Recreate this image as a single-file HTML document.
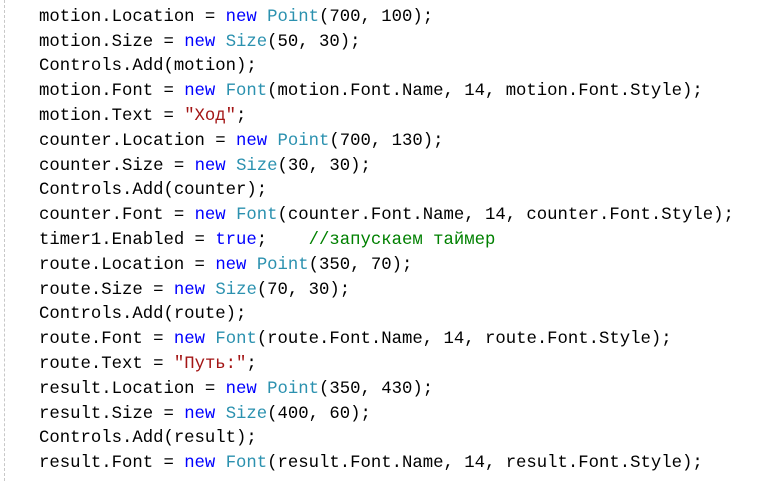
<!DOCTYPE html>
<html><head><meta charset="utf-8"><style>
html,body{margin:0;padding:0;background:#fff;width:773px;height:481px;overflow:hidden;position:relative}
.b{position:absolute;left:4px;top:0;height:481px;border-left:1px dashed #c8c8c8}
pre{position:absolute;left:39px;top:-19px;margin:0;font-family:"Liberation Mono","DejaVu Sans Mono",monospace;font-size:17.3px;line-height:24.8px;color:#000}
.k{color:#0000ff}.t{color:#2b91af}.s{color:#a31515}.c{color:#008000}
</style></head><body><div class="b"></div><pre>}
motion.Location = <span class="k">new</span> <span class="t">Point</span>(700, 100);
motion.Size = <span class="k">new</span> <span class="t">Size</span>(50, 30);
Controls.Add(motion);
motion.Font = <span class="k">new</span> <span class="t">Font</span>(motion.Font.Name, 14, motion.Font.Style);
motion.Text = <span class="s">"Ход"</span>;
counter.Location = <span class="k">new</span> <span class="t">Point</span>(700, 130);
counter.Size = <span class="k">new</span> <span class="t">Size</span>(30, 30);
Controls.Add(counter);
counter.Font = <span class="k">new</span> <span class="t">Font</span>(counter.Font.Name, 14, counter.Font.Style);
timer1.Enabled = <span class="k">true</span>;    <span class="c">//запускаем таймер</span>
route.Location = <span class="k">new</span> <span class="t">Point</span>(350, 70);
route.Size = <span class="k">new</span> <span class="t">Size</span>(70, 30);
Controls.Add(route);
route.Font = <span class="k">new</span> <span class="t">Font</span>(route.Font.Name, 14, route.Font.Style);
route.Text = <span class="s">"Путь:"</span>;
result.Location = <span class="k">new</span> <span class="t">Point</span>(350, 430);
result.Size = <span class="k">new</span> <span class="t">Size</span>(400, 60);
Controls.Add(result);
result.Font = <span class="k">new</span> <span class="t">Font</span>(result.Font.Name, 14, result.Font.Style);</pre></body></html>
